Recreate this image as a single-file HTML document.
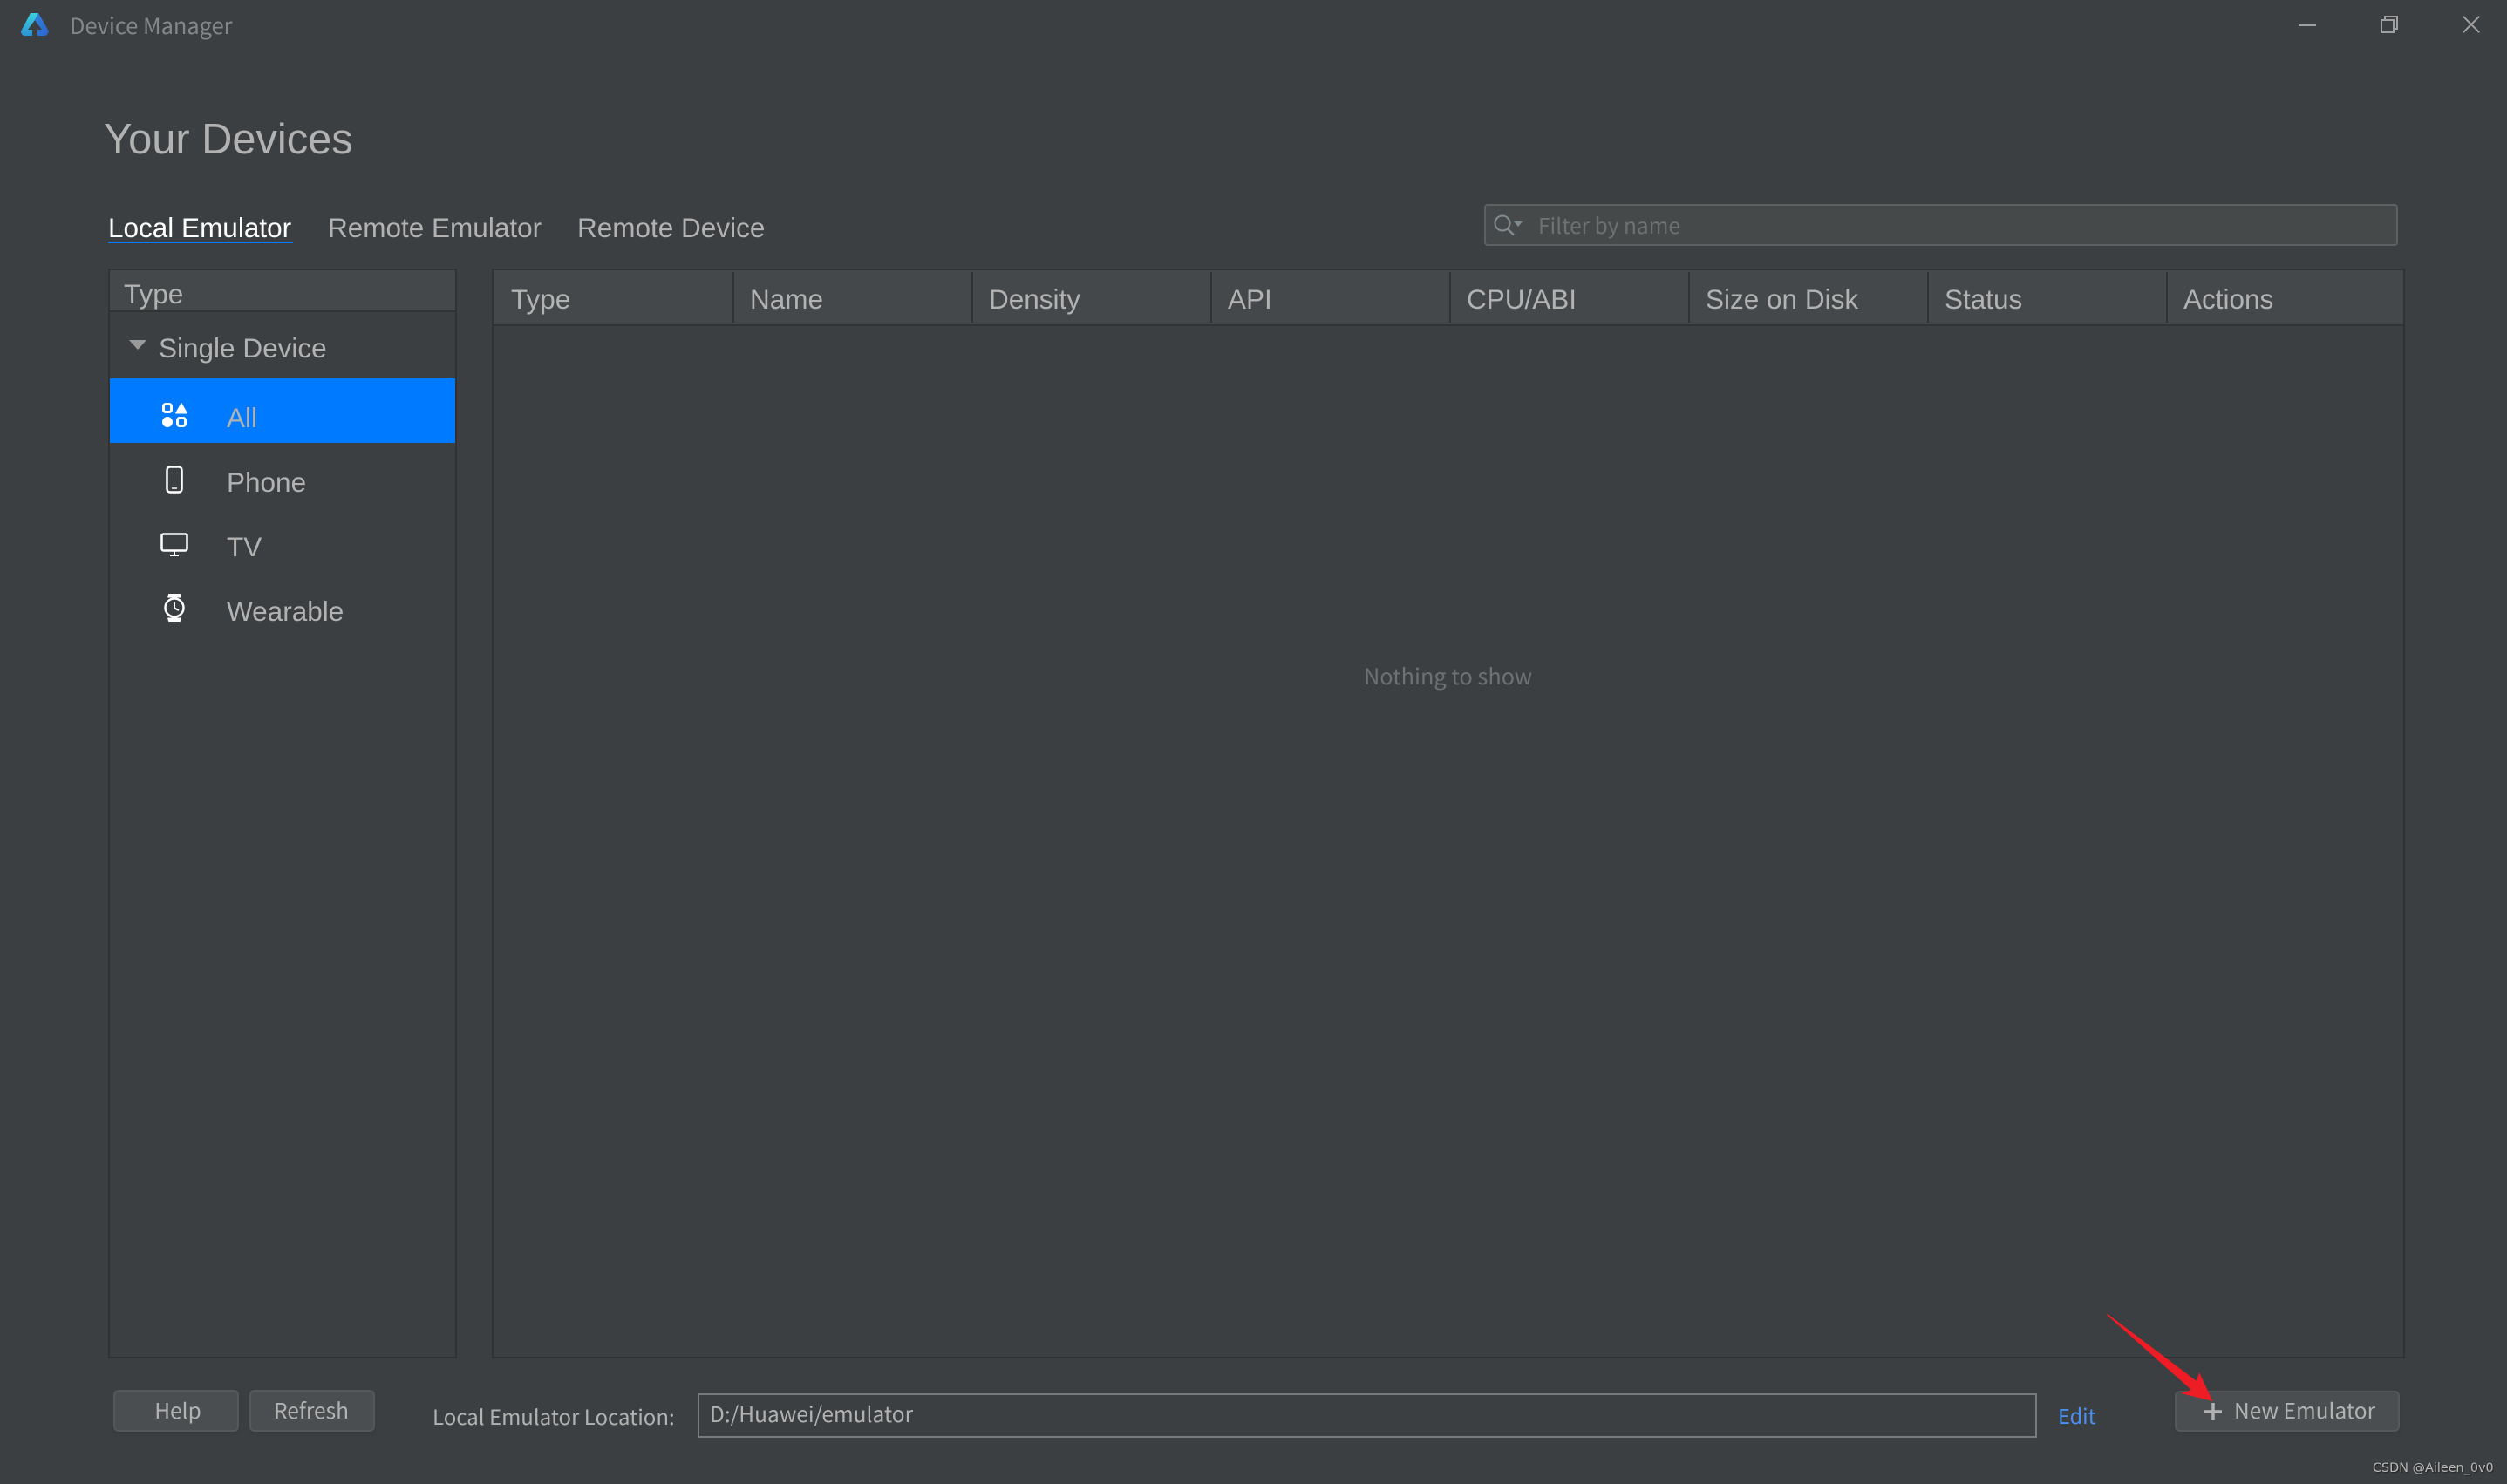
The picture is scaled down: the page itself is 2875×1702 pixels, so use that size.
<!DOCTYPE html>
<html lang="en"><head><meta charset="utf-8"><title>Device Manager</title>
<style>
html,body{margin:0;padding:0;background:#3c3f41}
#r{position:relative;width:2875px;height:1702px;overflow:hidden;background:#3c3f41;font-family:"Liberation Sans",sans-serif;color:#b2b2b2}
#r div,#r span.t{position:absolute;white-space:nowrap;box-sizing:border-box}
.t{line-height:1}
.a{font-size:31.5px}
.y{font-family:"Noto Sans CJK SC","Liberation Sans",sans-serif;font-size:24.5px}
.btn{background:#4b4e50;border:2px solid #55585a;border-radius:6px;box-shadow:0 3px 3px #383a3c}
.d{top:312px;width:2px;height:58px;background:#323232}
svg{position:absolute;overflow:visible}
</style></head><body><div id="r">

<svg style="left:0;top:0" width="64" height="48" viewBox="0 0 64 48">
<defs><linearGradient id="g1" x1="0" y1="0" x2="0" y2="1"><stop offset="0" stop-color="#3ed0dc"/><stop offset="1" stop-color="#2a93d8"/></linearGradient>
<linearGradient id="g2" x1="0" y1="0" x2="1" y2="1"><stop offset="0" stop-color="#2f86dc"/><stop offset="1" stop-color="#2c62d0"/></linearGradient></defs>
<path d="M35 15H44L40 23L32 34H37V41H28Q26 41 25 39L24 37Q23.500 36 24.500 35Z" fill="url(#g1)"/>
<path d="M44 15L55.500 35Q56 36 55.500 37.500L54 39.500Q53 41 51 41H43V34H48L40 23Z" fill="url(#g2)"/>
</svg>
<div class="t y" style="left:80px;top:14px;color:#848688;font-size:25.4px;line-height:30px">Device Manager</div>

<div style="left:2636px;top:28px;width:20px;height:2px;background:#a0a0a0"></div>
<svg style="left:2730px;top:18px" width="20" height="20" fill="none" stroke="#a0a0a0" stroke-width="2"><rect x="1" y="5" width="14" height="14"/><path d="M5 5V1H19V15H15"/></svg>
<svg style="left:2824px;top:18px" width="20" height="20" fill="none" stroke="#a0a0a0" stroke-width="2"><path d="M.7.700L19.300 19.300M19.300.700L.7 19.300"/></svg>

<div class="t" style="left:119px;top:134px;font-size:48.800px;line-height:52px;color:#b2b2b2">Your Devices</div>

<div class="t a" style="left:124px;top:244px;line-height:34px;color:#fff">Local Emulator</div>
<div style="left:124px;top:277px;width:212px;height:2px;background:#007aff"></div>
<div class="t a" style="left:376px;top:244px;line-height:34px">Remote Emulator</div>
<div class="t a" style="left:662px;top:244px;line-height:34px">Remote Device</div>

<div style="left:1702px;top:234px;width:1048px;height:48px;background:#46494a;border:2px solid #5e6062;border-radius:4px"></div>
<svg style="left:1713px;top:246px" width="34" height="26" fill="none"><circle cx="10" cy="10" r="8.500" stroke="#7f8b90" stroke-width="2"/><path d="M15.500 16L23 23.500" stroke="#7f8b90" stroke-width="2.500"/><path d="M23 8H33L28 14Z" fill="#7f8b90"/></svg>
<div class="t y" style="left:1764px;top:243px;line-height:32px;color:#6e7072">Filter by name</div>

<!-- left panel -->
<div style="left:124px;top:308px;width:400px;height:1250px;background:#3c3f41;border:2px solid #323232"></div>
<div style="left:126px;top:310px;width:396px;height:48px;background:#45484a;border-bottom:2px solid #323232"></div>
<div class="t a" style="left:142px;top:320px;line-height:34px">Type</div>
<svg style="left:148px;top:390px" width="20" height="12"><path d="M0 0H20L10 11Z" fill="#9a9a9a"/></svg>
<div class="t a" style="left:182px;top:382px;line-height:34px">Single Device</div>
<div style="left:126px;top:434px;width:396px;height:74px;background:#007aff"></div>

<svg style="left:185px;top:460px" width="32" height="32">
<rect x="2.500" y="3.500" width="9" height="9" rx="2.500" fill="none" stroke="#fff" stroke-width="3"/>
<path d="M23 2.500L29.500 14H16.500Z" fill="#fff" stroke="#fff" stroke-width="1" stroke-linejoin="round"/>
<circle cx="7" cy="24" r="6" fill="#fff"/>
<rect x="18.500" y="19.500" width="9" height="9" rx="2.500" fill="none" stroke="#fff" stroke-width="3"/>
</svg>
<div class="t a" style="left:260px;top:462px;line-height:34px">All</div>

<svg style="left:190px;top:534px" width="20" height="32" fill="none"><rect x="1.500" y="1.500" width="17" height="29" rx="3.500" stroke="#fff" stroke-width="2.500"/><path d="M7 26H13" stroke="#fff" stroke-width="1.500"/></svg>
<div class="t a" style="left:260px;top:536px;line-height:34px">Phone</div>

<svg style="left:184px;top:611px" width="32" height="28" fill="none"><rect x="1.500" y="1.500" width="29" height="19" rx="2" stroke="#fff" stroke-width="2.500"/><path d="M16 21V25M11 26H21" stroke="#fff" stroke-width="2"/></svg>
<div class="t a" style="left:260px;top:610px;line-height:34px">TV</div>

<svg style="left:188px;top:681px" width="24" height="32" fill="none"><path d="M5 4.500L6 1H18L19 4.500M5 27.500L6 31H18L19 27.500" fill="#fff" stroke="#fff" stroke-width="2"/><circle cx="12" cy="16" r="10.500" stroke="#fff" stroke-width="2.500"/><path d="M12 10V16.500L17 19" stroke="#fff" stroke-width="2"/></svg>
<div class="t a" style="left:260px;top:684px;line-height:34px">Wearable</div>

<!-- table -->
<div style="left:564px;top:308px;width:2194px;height:1250px;background:#3c3f41;border:2px solid #323232"></div>
<div style="left:566px;top:310px;width:2190px;height:64px;background:#45484a;border-bottom:2px solid #323232"></div>
<div class="d" style="left:840px"></div><div class="d" style="left:1114px"></div><div class="d" style="left:1388px"></div><div class="d" style="left:1662px"></div><div class="d" style="left:1936px"></div><div class="d" style="left:2210px"></div><div class="d" style="left:2484px"></div>
<div class="t a" style="left:586px;top:326px;line-height:34px">Type</div>
<div class="t a" style="left:860px;top:326px;line-height:34px">Name</div>
<div class="t a" style="left:1134px;top:326px;line-height:34px">Density</div>
<div class="t a" style="left:1408px;top:326px;line-height:34px">API</div>
<div class="t a" style="left:1682px;top:326px;line-height:34px">CPU/ABI</div>
<div class="t a" style="left:1956px;top:326px;line-height:34px">Size on Disk</div>
<div class="t a" style="left:2230px;top:326px;line-height:34px">Status</div>
<div class="t a" style="left:2504px;top:326px;line-height:34px">Actions</div>
<div class="t y" style="left:1564px;top:758px;line-height:34px;color:#6e7072;font-size:25.300px">Nothing to show</div>

<!-- bottom -->
<div class="btn" style="left:130px;top:1594px;width:144px;height:48px"></div>
<div class="t y" style="left:132px;top:1602px;width:144px;text-align:center;line-height:32px">Help</div>
<div class="btn" style="left:286px;top:1594px;width:144px;height:48px"></div>
<div class="t y" style="left:285px;top:1602px;width:144px;text-align:center;line-height:32px">Refresh</div>
<div class="t y" style="left:496px;top:1608px;line-height:32px;font-size:24px">Local Emulator Location:</div>
<div style="left:800px;top:1598px;width:1536px;height:51px;border:2px solid #77797b"></div>
<div class="t y" style="left:814px;top:1606px;line-height:32px">D:/Huawei/emulator</div>
<div class="t y" style="left:2360px;top:1607px;line-height:32px;color:#4a90ee;font-size:23.500px">Edit</div>
<div class="btn" style="left:2494px;top:1595px;width:258px;height:47px"></div>
<svg style="left:2527px;top:1608px" width="22" height="22"><path d="M11 1V21M1 11H21" stroke="#b2b2b2" stroke-width="3.500"/></svg>
<div class="t y" style="left:2562px;top:1602px;line-height:32px">New Emulator</div>
<svg style="left:0;top:0" width="2875" height="1702"><path d="M2417 1507L2519 1584L2522 1574L2537.500 1607L2501 1598L2513 1594L2416 1508Z" fill="#ee1c25"/></svg>
<div class="t" style="left:2721px;top:1675px;font-size:14.400px;line-height:18px;color:#b8b8b8;font-family:'DejaVu Sans',sans-serif;text-shadow:1px 1px 1px #222">CSDN @Aileen_0v0</div>
</div></body></html>
